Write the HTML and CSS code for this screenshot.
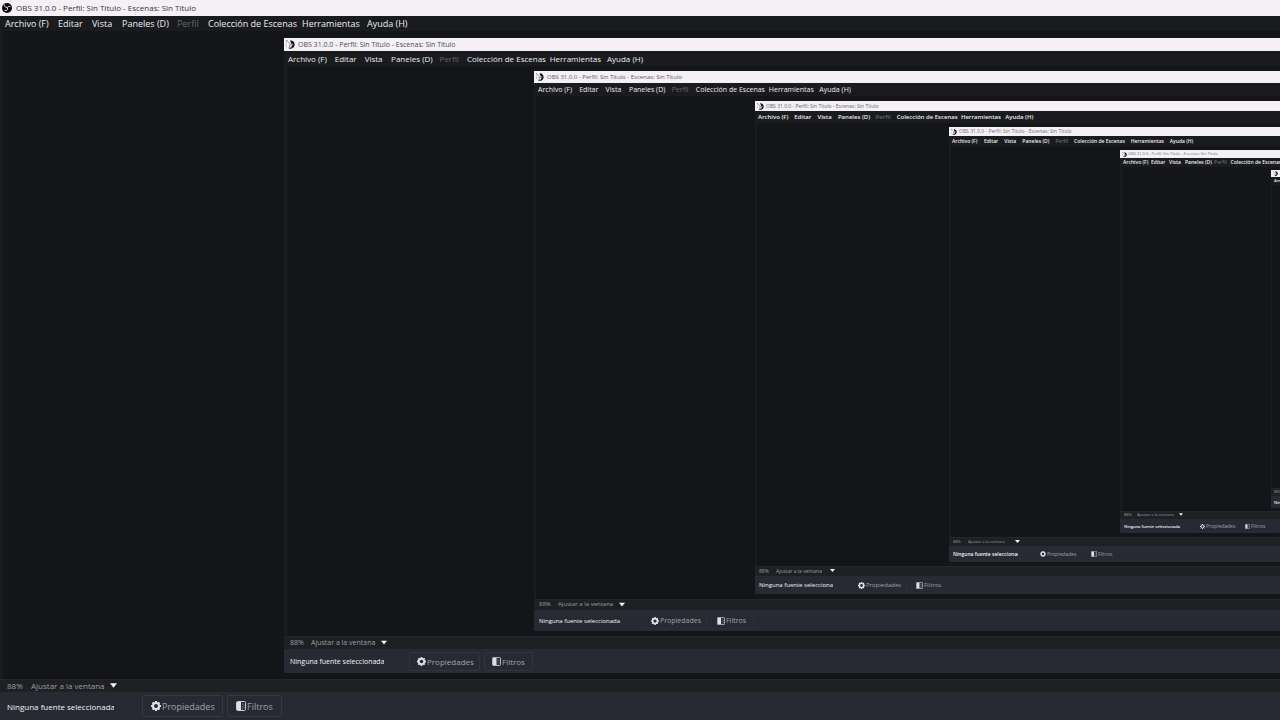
FILE: index.html
```
<!DOCTYPE html>
<html lang="es">
<head>
<meta charset="utf-8">
<title>OBS 31.0.0 - Perfil: Sin Título - Escenas: Sin Título</title>
<link rel="stylesheet" href="styles.css">
</head>
<body>
<svg class="defs" aria-hidden="true">
  <symbol id="logo" viewBox="0 0 20 20">
    <circle cx="10" cy="10" r="10" fill="#0b0b0d"/>
    <path d="M5 4c0 3 1 5 5 5M16 7c-4-1-6 1-5 4M6 15c4 1 6-1 5-4" fill="none" stroke="#d8d4d8" stroke-width="2" stroke-linecap="round"/>
  </symbol>
  <symbol id="logo-cursor" viewBox="0 0 20 20">
    <path d="M9 1a9 9 0 0 1 10 10a9 9 0 0 1-14 7l5-2 4-3z" fill="#0b0b0d"/>
    <path d="M13 9l3 1M8 17l5-2" stroke="#d8d4d8" stroke-width="2"/>
    <path d="M0 0V15L4 12L6 17L9 16L7 11H12Z" fill="#fff"/>
    <path d="M0 15V0L12 11H7L9 16L6 17" fill="none" stroke="#1b1b1f" stroke-width="1"/>
  </symbol>
  <symbol id="gear" viewBox="0 0 20 20">
    <circle cx="10" cy="10" r="6" fill="none" stroke="#dfe0e6" stroke-width="4"/>
    <path d="M10 0v4M10 16v4M0 10h4M16 10h4M3 3l3 3M14 14l3 3M17 3l-3 3M6 14l-3 3" stroke="#dfe0e6" stroke-width="4"/>
  </symbol>
  <symbol id="filter" viewBox="0 0 20 20">
    <rect x="1" y="1" width="18" height="18" rx="2" fill="none" stroke="#c9cad2" stroke-width="2"/>
    <path d="M2 2h8v16H2z" fill="#dfe0e6"/>
    <path d="M13 5v2M13 10v2M13 15v2M16 7v2M16 12v2" stroke="#8d8f99" stroke-width="2"/>
  </symbol>
  <symbol id="arrow" viewBox="0 0 8 5"><path d="M0 0h8L4 5z" fill="#f4f4f6"/></symbol>
</svg>
<main class="window l0">
  <header class="title"><svg class="logo"><use href="#logo"/></svg><span>OBS 31.0.0 - Perfil: Sin Título - Escenas: Sin Título</span></header>
  <nav class="menu"><button>Archivo (F)</button><button>Editar</button><button>Vista</button><button>Paneles (D)</button><button disabled>Perfil</button><button>Colección de Escenas</button><button>Herramientas</button><button>Ayuda (H)</button></nav>
  <div class="canvas">
    <section class="window l1">
      <header class="title"><svg class="logo"><use href="#logo-cursor"/></svg><span>OBS 31.0.0 - Perfil: Sin Título - Escenas: Sin Título</span></header>
      <nav class="menu"><button>Archivo (F)</button><button>Editar</button><button>Vista</button><button>Paneles (D)</button><button disabled>Perfil</button><button>Colección de Escenas</button><button>Herramientas</button><button>Ayuda (H)</button></nav>
      <div class="canvas">
        <section class="window l2">
          <header class="title"><svg class="logo"><use href="#logo-cursor"/></svg><span>OBS 31.0.0 - Perfil: Sin Título - Escenas: Sin Título</span></header>
          <nav class="menu"><button>Archivo (F)</button><button>Editar</button><button>Vista</button><button>Paneles (D)</button><button disabled>Perfil</button><button>Colección de Escenas</button><button>Herramientas</button><button>Ayuda (H)</button></nav>
          <div class="canvas">
            <section class="window l3">
              <header class="title"><svg class="logo"><use href="#logo-cursor"/></svg><span>OBS 31.0.0 - Perfil: Sin Título - Escenas: Sin Título</span></header>
              <nav class="menu"><button>Archivo (F)</button><button>Editar</button><button>Vista</button><button>Paneles (D)</button><button disabled>Perfil</button><button>Colección de Escenas</button><button>Herramientas</button><button>Ayuda (H)</button></nav>
              <div class="canvas">
                <section class="window l4">
                  <header class="title"><svg class="logo"><use href="#logo-cursor"/></svg><span>OBS 31.0.0 - Perfil: Sin Título - Escenas: Sin Título</span></header>
                  <nav class="menu"><button>Archivo (F)</button><button>Editar</button><button>Vista</button><button>Paneles (D)</button><button disabled>Perfil</button><button>Colección de Escenas</button><button>Herramientas</button><button>Ayuda (H)</button></nav>
                  <div class="canvas">
                    <section class="window l5">
                      <header class="title"><svg class="logo"><use href="#logo-cursor"/></svg><span>OBS 31.0.0 - Perfil: Sin Título - Escenas: Sin Título</span></header>
                      <nav class="menu"><button>Archivo (F)</button><button>Editar</button><button>Vista</button><button>Paneles (D)</button><button disabled>Perfil</button><button>Colección de Escenas</button></nav>
                      <div class="canvas">
                        <section class="window l6">
                          <header class="title"><svg class="logo"><use href="#logo-cursor"/></svg></header>
                          <nav class="menu"><button>Archivo (F)</button></nav>
                          <div class="canvas"></div>
                          <div class="status"><span class="pct">88%</span></div>
                          <footer class="source"><span class="name">Ninguna fuente seleccionada</span></footer>
                        </section>
                      </div>
                      <div class="status"><span class="pct">88%</span><span class="fit"><select aria-label="Escala"><option>Ajustar a la ventana</option></select><svg><use href="#arrow"/></svg></span></div>
                      <footer class="source"><span class="name">Ninguna fuente seleccionada</span><button class="props"><svg><use href="#gear"/></svg>Propiedades</button><button class="filters"><svg><use href="#filter"/></svg>Filtros</button></footer>
                    </section>
                  </div>
                  <div class="status"><span class="pct">88%</span><span class="fit"><select aria-label="Escala"><option>Ajustar a la ventana</option></select><svg><use href="#arrow"/></svg></span></div>
                  <footer class="source"><span class="name">Ninguna fuente seleccionada</span><button class="props"><svg><use href="#gear"/></svg>Propiedades</button><button class="filters"><svg><use href="#filter"/></svg>Filtros</button></footer>
                </section>
              </div>
              <div class="status"><span class="pct">88%</span><span class="fit"><select aria-label="Escala"><option>Ajustar a la ventana</option></select><svg><use href="#arrow"/></svg></span></div>
              <footer class="source"><span class="name">Ninguna fuente seleccionada</span><button class="props"><svg><use href="#gear"/></svg>Propiedades</button><button class="filters"><svg><use href="#filter"/></svg>Filtros</button></footer>
            </section>
          </div>
          <div class="status"><span class="pct">88%</span><span class="fit"><select aria-label="Escala"><option>Ajustar a la ventana</option></select><svg><use href="#arrow"/></svg></span></div>
          <footer class="source"><span class="name">Ninguna fuente seleccionada</span><button class="props"><svg><use href="#gear"/></svg>Propiedades</button><button class="filters"><svg><use href="#filter"/></svg>Filtros</button></footer>
        </section>
      </div>
      <div class="status"><span class="pct">88%</span><span class="fit"><select aria-label="Escala"><option>Ajustar a la ventana</option></select><svg><use href="#arrow"/></svg></span></div>
      <footer class="source"><span class="name">Ninguna fuente seleccionada</span><button class="props"><svg><use href="#gear"/></svg>Propiedades</button><button class="filters"><svg><use href="#filter"/></svg>Filtros</button></footer>
    </section>
  </div>
  <div class="status"><span class="pct">88%</span><span class="fit"><select aria-label="Escala"><option>Ajustar a la ventana</option></select><svg><use href="#arrow"/></svg></span></div>
  <footer class="source"><span class="name">Ninguna fuente seleccionada</span><button class="props"><svg><use href="#gear"/></svg>Propiedades</button><button class="filters"><svg><use href="#filter"/></svg>Filtros</button></footer>
</main>
</body>
</html>
```
FILE: styles.css
```
* { box-sizing: border-box; }
body { margin: 0; background: #141519; overflow: hidden; font-family: "Open Sans", "Noto Sans", sans-serif; }
.defs { display: none; }
button, select { margin: 0; padding: 0; border: 0; background: none; color: inherit; font: inherit; line-height: inherit; text-align: left; white-space: nowrap; }

.window { display: flex; flex-direction: column; flex: 1; min-width: 0; overflow: hidden; background: #1a1b1f; white-space: nowrap; }
.l0 { height: 100vh; }
.title { display: flex; align-items: center; flex: none; height: var(--title-h); padding-left: var(--logo-x); gap: var(--logo-gap); background: #f4f0f5; color: var(--title-ink); font-size: var(--title-fs); line-height: var(--title-h); }
.logo { flex: none; width: var(--logo); height: var(--logo); }
.menu { display: grid; grid-template-columns: 53fr 34fr 30fr 55fr 31fr 94fr 65fr 42fr; flex: none; align-items: center; width: var(--menu-w); height: var(--menu-h); margin-left: var(--pad); color: #ececf0; font-size: var(--fs); line-height: var(--menu-h); }
.menu button { min-width: 0; }
.menu button:disabled { color: #65666c; }
.canvas { display: flex; flex: 1; min-height: 0; margin-left: var(--edge); padding: var(--in-top) 0 var(--in-bottom) var(--in-left); background: #141519; }
.status { display: flex; align-items: center; flex: none; height: var(--status-h); padding: 0 0 2px var(--foot-pad); color: #9b9ca3; font-size: var(--status-fs); line-height: var(--status-h); background: #1f2024; border-top: 1px solid #25262b; }
.pct { width: var(--pct-w); }
.fit { position: relative; display: flex; align-items: center; width: var(--fit-w); }
.fit select { width: 100%; appearance: none; }
.fit svg { position: absolute; right: 0; width: var(--arrow); height: 5px; pointer-events: none; }
.source { display: flex; align-items: center; flex: none; height: var(--source-h); padding-left: var(--foot-pad); background: #282a33; color: #f2f2f5; font-size: var(--source-fs); }
.name { flex: none; width: var(--name-w); margin-right: var(--name-gap); overflow: hidden; }
.source button { display: flex; align-items: center; flex: none; gap: 1px; height: var(--btn-h); padding-left: var(--btn-pad); border: 1px solid var(--btn-line); border-radius: 2px; color: #a0a1a9; font-size: var(--btn-fs); }
.source button svg { flex: none; width: var(--icon); height: var(--icon); }
.props { width: var(--props-w); }
.filters { width: var(--filters-w); margin-left: 4px; }

.l0 { --title-h: 16px; --title-ink: #38363a; --title-fs: 8px; --logo: 10px; --logo-x: 2px; --logo-gap: 4px; --menu-h: 15px; --menu-w: 404px; --pad: 5px; --fs: 9px; --edge: 3px; --in-top: 7px; --in-bottom: 6px; --in-left: 281px; --status-h: 13px; --status-fs: 8px; --foot-pad: 7px; --pct-w: 24px; --fit-w: 86px; --arrow: 7px; --source-h: 28px; --source-fs: 8px; --name-w: 107px; --name-gap: 28px; --btn-h: 22px; --btn-pad: 8px; --btn-line: #363842; --btn-fs: 9px; --icon: 10px; --props-w: 81px; --filters-w: 55px; }
.l1 { --title-h: 13px; --title-ink: #4c4a4e; --title-fs: 7px; --logo: 9px; --logo-x: 2px; --logo-gap: 3px; --menu-h: 15px; --menu-w: 356px; --pad: 4px; --fs: 8px; --edge: 3px; --in-top: 5px; --in-bottom: 5px; --in-left: 247px; --status-h: 13px; --status-fs: 7px; --foot-pad: 6px; --pct-w: 21px; --fit-w: 76px; --arrow: 6px; --source-h: 24px; --source-fs: 7px; --name-w: 94px; --name-gap: 25px; --btn-h: 19px; --btn-pad: 7px; --btn-line: #32343e; --btn-fs: 8px; --icon: 9px; --props-w: 71px; --filters-w: 49px; }
.l2 { --title-h: 12px; --title-ink: #5c595e; --title-fs: 6px; --logo: 8px; --logo-x: 2px; --logo-gap: 3px; --menu-h: 13px; --menu-w: 314px; --pad: 4px; --fs: 7px; --edge: 2px; --in-top: 5px; --in-bottom: 5px; --in-left: 219px; --status-h: 11px; --status-fs: 6px; --foot-pad: 5px; --pct-w: 19px; --fit-w: 67px; --arrow: 6px; --source-h: 21px; --source-fs: 6px; --name-w: 83px; --name-gap: 23px; --btn-h: 17px; --btn-pad: 5px; --btn-line: #2c2e37; --btn-fs: 7px; --icon: 8px; --props-w: 62px; --filters-w: 43px; }
.l3 { --title-h: 10px; --title-ink: #68656a; --title-fs: 5px; --logo: 7px; --logo-x: 2px; --logo-gap: 2px; --menu-h: 12px; --menu-w: 276px; --pad: 3px; --fs: 6px; --edge: 2px; --in-top: 4px; --in-bottom: 4px; --in-left: 192px; --status-h: 10px; --status-fs: 5px; --foot-pad: 4px; --pct-w: 17px; --fit-w: 59px; --arrow: 5px; --source-h: 18px; --source-fs: 6px; --name-w: 74px; --name-gap: 20px; --btn-h: 15px; --btn-pad: 4px; --btn-line: #2b2d36; --btn-fs: 6px; --icon: 7px; --props-w: 54px; --filters-w: 38px; }
.l4 { --title-h: 9px; --title-ink: #747176; --title-fs: 5px; --logo: 6px; --logo-x: 2px; --logo-gap: 2px; --menu-h: 10px; --menu-w: 243px; --pad: 3px; --fs: 5px; --edge: 2px; --in-top: 4px; --in-bottom: 4px; --in-left: 169px; --status-h: 9px; --status-fs: 4px; --foot-pad: 4px; --pct-w: 15px; --fit-w: 52px; --arrow: 5px; --source-h: 16px; --source-fs: 5px; --name-w: 65px; --name-gap: 17px; --btn-h: 13px; --btn-pad: 4px; --btn-line: #2a2c35; --btn-fs: 5px; --icon: 6px; --props-w: 47px; --filters-w: 33px; }
.l5 { --title-h: 8px; --title-ink: #747176; --title-fs: 4px; --logo: 5px; --logo-x: 2px; --logo-gap: 1px; --menu-h: 9px; --menu-w: 214px; --pad: 3px; --fs: 5px; --edge: 2px; --in-top: 3px; --in-bottom: 3px; --in-left: 149px; --status-h: 8px; --status-fs: 4px; --foot-pad: 4px; --pct-w: 13px; --fit-w: 46px; --arrow: 4px; --source-h: 14px; --source-fs: 4px; --name-w: 57px; --name-gap: 15px; --btn-h: 11px; --btn-pad: 3px; --btn-line: #292b34; --btn-fs: 5px; --icon: 5px; --props-w: 41px; --filters-w: 29px; }
.l6 { --title-h: 7px; --title-fs: 4px; --logo: 5px; --logo-x: 2px; --menu-h: 8px; --menu-w: 188px; --pad: 3px; --fs: 4px; --edge: 1px; --in-top: 0px; --in-bottom: 0px; --in-left: 0px; --status-h: 8px; --status-fs: 4px; --foot-pad: 3px; --pct-w: 11px; --source-h: 12px; --source-fs: 4px; --name-w: 50px; --name-gap: 0px; }
.l3 .menu, .l4 .name { font-weight: 600; }
.l5 .menu { grid-template-columns: 53fr 34fr 30fr 55fr 31fr 201fr; }
```
